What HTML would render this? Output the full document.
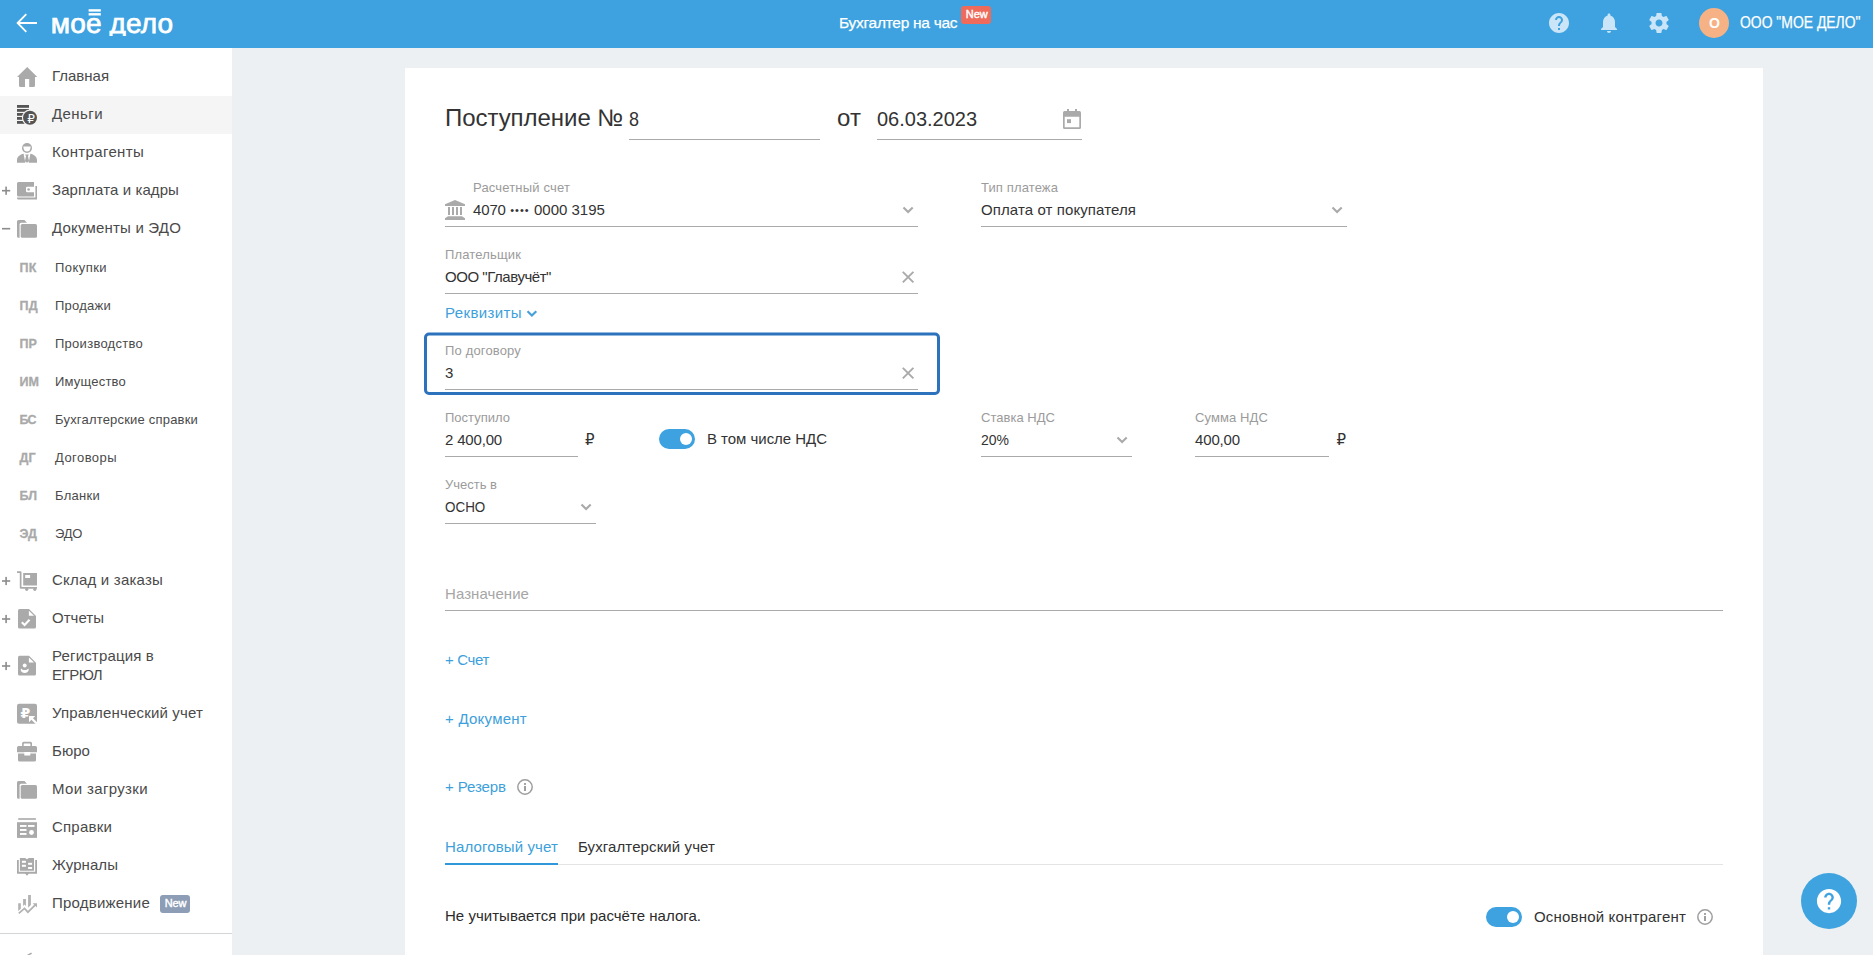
<!DOCTYPE html>
<html lang="ru"><head><meta charset="utf-8"><title>Поступление — Моё дело</title>
<style>
html,body{margin:0;padding:0;}
body{width:1873px;height:955px;overflow:hidden;position:relative;background:#ecf0f3;font-family:"Liberation Sans",sans-serif;}
.t{position:absolute;white-space:nowrap;line-height:20px;height:20px;}
.dj{font-family:"DejaVu Sans","Liberation Sans",sans-serif;}
.abs{position:absolute;}
#hdr{position:absolute;left:0;top:0;width:1873px;height:48px;background:#3da2df;}
#side{position:absolute;left:0;top:48px;width:232px;height:907px;background:#fff;}
#card{position:absolute;left:405px;top:68px;width:1358px;height:887px;background:#fff;}
.ul{position:absolute;height:1px;background:#aaa;}
.act{position:absolute;left:0;top:96px;width:232px;height:38px;background:#f5f5f5;}
.badge{position:absolute;border-radius:3px;}
.tog{position:absolute;width:36px;height:20px;border-radius:10px;background:#3da2df;}
.tog i{position:absolute;right:3px;top:4px;width:12px;height:12px;border-radius:50%;background:#fff;}
svg{position:absolute;overflow:visible;}
.logo{-webkit-text-stroke:0.75px #fff;}
.ws{-webkit-text-stroke:0.25px #fff;}
.ws2{-webkit-text-stroke:0.4px #fff;}
.ab{-webkit-text-stroke:0.3px #a9a9a9;}

</style></head><body>
<header>
<div id="hdr"></div>
<div class="badge" style="left:961px;top:6px;width:30px;height:18px;background:#ee6b5c"></div>
<div class="abs" style="left:1699px;top:8px;width:30px;height:30px;border-radius:50%;background:#f6b284"></div>
</header>
<nav>
<div id="side"></div>
<div class="act"></div>
<div class="abs" style="left:0;top:933px;width:232px;height:1px;background:#d3d6d9"></div>
<div class="badge" style="left:160px;top:895px;width:30px;height:18px;background:#8c9db5"></div>
</nav>
<main>
<div id="card"></div>
<div class="ul" style="left:629px;top:139px;width:191px"></div>
<div class="ul" style="left:877px;top:139px;width:205px"></div>
<div class="ul" style="left:445px;top:226px;width:473px"></div>
<div class="ul" style="left:981px;top:226px;width:366px"></div>
<div class="ul" style="left:445px;top:293px;width:473px"></div>
<div class="ul" style="left:445px;top:389px;width:473px"></div>
<div class="ul" style="left:445px;top:456px;width:133px"></div>
<div class="ul" style="left:981px;top:456px;width:151px"></div>
<div class="ul" style="left:1195px;top:456px;width:134px"></div>
<div class="ul" style="left:445px;top:523px;width:151px"></div>
<div class="ul" style="left:445px;top:610px;width:1278px"></div>
<div class="abs" style="left:445px;top:864px;width:1278px;height:1px;background:#e4e4e4"></div>
<div class="abs" style="left:445px;top:863px;width:113px;height:2px;background:#2f98db"></div>
<div class="tog" style="left:659px;top:429px"><i></i></div>
<div class="tog" style="left:1486px;top:907px"><i></i></div>
<div class="abs" style="left:1801px;top:873px;width:56px;height:56px;border-radius:50%;background:#3ea3df"></div>
</main>
<svg width="1873" height="955" viewBox="0 0 1873 955" style="left:0;top:0">
<!-- header: back arrow -->
<g fill="none" stroke="#fff" stroke-width="1.8" stroke-linecap="butt" stroke-linejoin="miter">
<path d="M37 23H18.5M26.3 14.2L17.6 23l8.7 8.8"/>
</g>
<!-- logo bars -->
<rect x="88.6" y="9.2" width="12.2" height="2.4" fill="#fff"/><rect x="88.6" y="13.1" width="12.2" height="2.4" fill="#fff"/>
<!-- header right icons (material) -->
<g fill="#c9e5f7">
<path transform="translate(1547,11)" d="M12 2C6.48 2 2 6.48 2 12s4.48 10 10 10 10-4.48 10-10S17.52 2 12 2zm1 17h-2v-2h2v2zm2.07-7.75l-.9.92C13.45 12.9 13 13.5 13 15h-2v-.5c0-1.1.45-2.1 1.17-2.83l1.24-1.26c.37-.36.59-.86.59-1.41 0-1.1-.9-2-2-2s-2 .9-2 2H8c0-2.210 1.790-4 4-4s4 1.790 4 4c0 .88-.36 1.680-.93 2.250z"/>
<path transform="translate(1597,11)" d="M12 22c1.100 0 2-.9 2-2h-4c0 1.100.89 2 2 2zm6-6v-5c0-3.070-1.640-5.640-4.500-6.320V4c0-.83-.67-1.500-1.500-1.500s-1.500.67-1.500 1.500v.68C7.630 5.360 6 7.920 6 11v5l-2 2v1h16v-1l-2-2z"/>
<path transform="translate(1647,11)" d="M19.43 12.98c.04-.32.07-.64.07-.98s-.03-.66-.07-.98l2.11-1.65c.19-.15.24-.42.12-.64l-2-3.46c-.12-.22-.39-.3-.61-.22l-2.49 1c-.52-.4-1.08-.73-1.69-.98l-.38-2.65C14.46 2.18 14.25 2 14 2h-4c-.25 0-.46.18-.49.42l-.38 2.65c-.61.25-1.17.59-1.69.98l-2.49-1c-.23-.09-.49 0-.61.22l-2 3.46c-.13.22-.07.49.12.64l2.11 1.65c-.04.32-.07.65-.07.98s.03.66.07.98l-2.11 1.65c-.19.15-.24.42-.12.64l2 3.46c.12.22.39.3.61.22l2.49-1c.52.4 1.08.73 1.69.98l.38 2.65c.03.24.24.42.49.42h4c.25 0 .46-.18.49-.42l.38-2.65c.61-.25 1.17-.59 1.69-.98l2.49 1c.23.09.49 0 .61-.22l2-3.46c.12-.22.07-.49-.12-.64l-2.11-1.65zM12 15.5c-1.93 0-3.5-1.57-3.5-3.500s1.570-3.500 3.500-3.500 3.500 1.570 3.500 3.500-1.570 3.500-3.500 3.500z"/>
</g>
<!-- SIDEBAR ICONS -->
<g fill="#aaa">
<!-- home -->
<path d="M27.200 67L17 77h2v8.500a1.500 1.500 0 0 0 1.500 1.500H25v-8h4.200v8h4.300a1.500 1.500 0 0 0 1.500-1.500V77h2.300z"/>
<!-- person -->
<circle cx="27" cy="148" r="5"/>
<path d="M23.300 146.600h7.400a3.700 5 0 0 1-7.400 0z" fill="#fff"/>
<path d="M17 162.700v-2.700c0-3.200 3-5.400 6.600-6.200l1.700 8.900zM37 162.700v-2.700c0-3.200-3-5.400-6.600-6.200l-1.700 8.900z"/>
<path d="M25.200 154.400h3.600l-.8 1.900 1.100 4.900-2.100 1.500-2.100-1.500 1.100-4.900z"/>
<!-- wallet -->
<path d="M18.500 182H34v4.800h-6.700a1.300 1.300 0 0 0-1.300 1.300v2.900a1.300 1.300 0 0 0 1.300 1.300H34v4.200H18.500a1.500 1.500 0 0 1-1.500-1.500v-11.500a1.500 1.500 0 0 1 1.500-1.500z"/>
<circle cx="28.600" cy="189.500" r="1.300"/>
<path d="M35.400 186H37v13.600H18.500a1.500 1.500 0 0 1-1.500-1.500v-.6h18.400z"/>
<!-- folder docs -->
<path d="M17 221.5a1.5 1.5 0 0 1 1.5-1.5h6l2.4 2.8h-5.800a1.500 1.500 0 0 0-1.500 1.500v13.500h-1.100a1.500 1.500 0 0 1-1.500-1.500z"/>
<rect x="20.7" y="224" width="16.3" height="13.8" rx="1.6"/>
<!-- cart -->
<path d="M17 571.300h3.600a.9.900 0 0 1 .9.900v14.900H37v1.700H20.800a1 1 0 0 1-1-1V573H17z"/>
<path d="M23.200 573H37v12.600H23.200zM25.200 575v2.900h4.900V575z" fill-rule="evenodd"/>
<circle cx="26.700" cy="589.300" r="1.600"/><circle cx="34.800" cy="589.300" r="1.600"/>
<!-- report doc -->
<path d="M19.500 609H29l7 7v11.100a1.500 1.500 0 0 1-1.500 1.500h-15a1.500 1.500 0 0 1-1.500-1.500v-16.600a1.500 1.500 0 0 1 1.500-1.500z"/>
<!-- reg doc -->
<path d="M19.500 655.800H29l7 7v11.200a1.500 1.500 0 0 1-1.500 1.500h-15a1.500 1.500 0 0 1-1.500-1.500v-16.700a1.500 1.500 0 0 1 1.500-1.500z"/>
<!-- mgmt -->
<rect x="17" y="703.800" width="20" height="20" rx="2"/>
<!-- briefcase -->
<path d="M23.600 741.800h6.900a1.500 1.500 0 0 1 1.500 1.500v2.700h-1.600v-2.100a.5.500 0 0 0-.5-.5h-5.700a.5.500 0 0 0-.5.500v2.100h-1.600v-2.700a1.500 1.500 0 0 1 1.500-1.500z"/>
<path d="M18.500 746h17a1.500 1.500 0 0 1 1.500 1.500v4.800H30.300v-.4h-6v.4H17v-4.800a1.500 1.500 0 0 1 1.500-1.500z"/>
<path d="M18 753.400h6.300v2.100h6v-2.100H36v6.700a1.500 1.500 0 0 1-1.500 1.500h-15a1.500 1.500 0 0 1-1.500-1.500z"/>
<!-- folder downloads -->
<path d="M17 782.5a1.5 1.5 0 0 1 1.5-1.5h6l2.4 2.8h-5.800a1.500 1.500 0 0 0-1.500 1.500v13.500h-1.100a1.500 1.500 0 0 1-1.500-1.500z"/>
<rect x="20.7" y="785" width="16.3" height="13.8" rx="1.6"/>
<!-- spravki -->
<rect x="18.200" y="818.200" width="17.700" height="1.600"/>
<rect x="17" y="822.200" width="20" height="15.700"/>
<!-- journals -->
<path d="M17 860.100h1.800v11.700H35.200V860.100H37v13.700H28.700l-1.700 1.900-1.700-1.900H17z"/>
<path d="M19.900 857.900h5.200l1.900 1.300 1.900-1.300h5.100v12.800H19.900z"/>
</g>
<!-- whites on sidebar icons -->
<g fill="#fff">
<path d="M28.900 610.700v5.100h5.200z"/>
<path d="M28.900 657.500v5.100h5.200z"/>
<path d="M21.800 622.300l2.800 2.700 4.900-5.300" fill="none" stroke="#fff" stroke-width="2.100"/>
<circle cx="24.700" cy="665.500" r="1.950"/>
<path d="M21.100 668.400c.9 1.100 2.100 1.700 3.600 1.700s2.700-.6 3.600-1.700c.3.400.4.900.4 1.400 0 1.900-1.800 3.300-4 3.300s-4-1.400-4-3.300c0-.5.100-1 .4-1.400z"/>
<!-- spravki lines -->
<rect x="20" y="825" width="6.500" height="1.900"/><rect x="28" y="825" width="6.500" height="1.900"/>
<rect x="20" y="829" width="6.500" height="1.900"/><rect x="20" y="833" width="6.500" height="1.900"/>
<circle cx="31.500" cy="832.500" r="2.400"/>
<!-- journal lines -->
<rect x="21.900" y="860.800" width="4" height="2"/><rect x="21.900" y="864.800" width="4" height="2"/>
<rect x="28.100" y="862.800" width="4" height="2"/><rect x="28.100" y="867" width="4" height="2"/>
<!-- mgmt arrow -->
<path d="M29 716h6.200l-2.200 2.200 4 4v1.600h-1.600l-4-4L29 722.200z"/>
</g>
<!-- promotion icon -->
<g fill="#b2b2b2"><path d="M18.200 903.200h2.600v5.500l-2.600 2.300z"/><path d="M23.100 899.100h2.800v6.800l-1.400-1.300-1.400 1.300z"/><path d="M28.100 895.100h2.800v10l-2.800 2.700z"/><path d="M32.700 903.200H37v4.300z"/></g>
<path d="M18.800 913.400l5.700-5 3.400 3.700 7.700-7.400" fill="none" stroke="#b2b2b2" stroke-width="1.800"/>
<!-- money (active) -->
<g fill="#555">
<rect x="17" y="105" width="12" height="2.8"/><rect x="17" y="109" width="12" height="2.8"/><rect x="17" y="113" width="12" height="2.8"/><rect x="17" y="117" width="12" height="2.8"/><rect x="17" y="121" width="12" height="2.8"/>
</g>
<circle cx="30" cy="117.700" r="8.100" fill="#f5f5f5"/><circle cx="30" cy="117.700" r="7" fill="#555"/>
<!-- FORM ICONS -->
<g fill="#aaa">
<path d="M455 200l10 4.300V206H445v-1.700z"/>
<rect x="448" y="207" width="2" height="8"/><rect x="452" y="207" width="2" height="8"/><rect x="456" y="207" width="2" height="8"/><rect x="460" y="207" width="2" height="8"/>
<path d="M448 216.200h14l3 2.100V220H445v-1.700z"/>
<!-- calendar -->
<path d="M1067 109h2v2.100h6V109h2v2.100h2.400a1.600 1.600 0 0 1 1.600 1.600v14.700a1.600 1.600 0 0 1-1.600 1.600h-14.800a1.600 1.600 0 0 1-1.600-1.600v-14.700a1.600 1.600 0 0 1 1.600-1.600h2.400zM1064.700 116.800v10.500h14.600v-10.500z" fill-rule="evenodd"/>
<rect x="1067" y="119.200" width="4" height="3.900"/>
</g>
<!-- chevrons -->
<g fill="none" stroke="#aaa" stroke-width="2.100">
<path d="M903.500 207.500l4.600 4.600 4.600-4.600"/>
<path d="M1332.500 207.500l4.600 4.600 4.600-4.600"/>
<path d="M1117.500 437.500l4.600 4.600 4.600-4.600"/>
<path d="M581.500 504.500l4.600 4.600 4.600-4.600"/>
</g>
<!-- X -->
<g fill="none" stroke="#aaa" stroke-width="1.900">
<path d="M902.800 271.800l10.600 10.600M913.400 271.800l-10.600 10.600"/>
<path d="M902.800 367.800l10.600 10.600M913.400 367.800l-10.600 10.600"/>
</g>
<path d="M527.500 311.200l4.400 4.400 4.400-4.400" fill="none" stroke="#459fd9" stroke-width="2.100"/>
<!-- info -->
<g fill="none" stroke="#9e9e9e" stroke-width="1.500"><circle cx="525" cy="787" r="7.200"/><circle cx="1705" cy="917" r="7.200"/></g>
<g fill="#9e9e9e"><rect x="524" y="783.100" width="2" height="1.800"/><rect x="524" y="786" width="2" height="5"/><rect x="1704" y="913.100" width="2" height="1.800"/><rect x="1704" y="916" width="2" height="5"/></g>
<path transform="translate(1814.5,886.600) scale(1.21)" d="M12 2C6.48 2 2 6.48 2 12s4.48 10 10 10 10-4.48 10-10S17.52 2 12 2zm1 17h-2v-2h2v2zm2.07-7.75l-.9.92C13.45 12.9 13 13.5 13 15h-2v-.5c0-1.1.45-2.1 1.17-2.83l1.24-1.26c.37-.36.59-.86.59-1.41 0-1.1-.9-2-2-2s-2 .9-2 2H8c0-2.21 1.79-4 4-4s4 1.79 4 4c0 .88-.36 1.68-.93 2.25z" fill="#fff"/>
<path d="M31.600 953.100L27 955.800" fill="none" stroke="#aaa" stroke-width="1.600"/>
<!-- focus ring -->
<rect x="425.500" y="334" width="513" height="59.400" rx="3.500" fill="none" stroke="#2d72bd" stroke-width="3"/>
<!-- plus / minus -->
<g fill="#8c8c8c">
<rect x="2" y="189.9" width="8.200" height="1.600"/>
<rect x="5.300" y="186.6" width="1.600" height="8.200"/>
<rect x="2" y="227.9" width="8.200" height="1.600"/>
<rect x="2" y="580.2" width="8.200" height="1.600"/>
<rect x="5.300" y="576.9" width="1.600" height="8.200"/>
<rect x="2" y="618.2" width="8.200" height="1.600"/>
<rect x="5.300" y="614.9" width="1.600" height="8.200"/>
<rect x="2" y="665.2" width="8.200" height="1.600"/>
<rect x="5.300" y="661.9" width="1.600" height="8.200"/>
</g>
</svg>
<header>
<span class="t ws" style="left:839px;top:12.600000000000001px;font-size:15.5px;color:#fff;letter-spacing:-0.276px;">Бухгалтер на час</span>
<span class="t ws2" style="left:965.8px;top:4.199999999999999px;font-size:11px;color:#fff;letter-spacing:-0.005px;">New</span>
<span class="t sx" style="left:1709.3px;top:12.8px;font-size:14px;color:#fff;font-weight:700;transform:scaleX(1.0009);transform-origin:0 50%;">О</span>
<span class="t ws sx" style="left:1740px;top:12.5px;font-size:15.6px;color:#fff;transform:scaleX(0.8928);transform-origin:0 50%;">ООО "МОЕ ДЕЛО"</span>
<span class="t logo" style="left:50.8px;top:13.7px;font-size:28px;color:#fff;letter-spacing:0.139px;">мое дело</span>
<div class="abs" style="left:106px;top:35.600px;width:28px;height:5px;background:#3da2df"></div>
</header>
<nav>
<span class="t" style="left:52px;top:66px;font-size:15px;color:#4a4a4a;letter-spacing:-0.013px;">Главная</span>
<span class="t" style="left:52px;top:104px;font-size:15px;color:#4a4a4a;letter-spacing:0.424px;">Деньги</span>
<span class="t" style="left:52px;top:142px;font-size:15px;color:#4a4a4a;letter-spacing:0.332px;">Контрагенты</span>
<span class="t" style="left:52px;top:180px;font-size:15px;color:#4a4a4a;letter-spacing:0.093px;">Зарплата и кадры</span>
<span class="t" style="left:52px;top:218px;font-size:15px;color:#4a4a4a;letter-spacing:0.190px;">Документы и ЭДО</span>
<span class="t" style="left:52px;top:570px;font-size:15px;color:#4a4a4a;letter-spacing:0.209px;">Склад и заказы</span>
<span class="t" style="left:52px;top:608px;font-size:15px;color:#4a4a4a;letter-spacing:0.023px;">Отчеты</span>
<span class="t" style="left:52px;top:646px;font-size:15px;color:#4a4a4a;letter-spacing:0.167px;">Регистрация в</span>
<span class="t" style="left:52px;top:665px;font-size:15px;color:#4a4a4a;letter-spacing:-0.494px;">ЕГРЮЛ</span>
<span class="t" style="left:52px;top:703px;font-size:15px;color:#4a4a4a;letter-spacing:0.166px;">Управленческий учет</span>
<span class="t" style="left:52px;top:741px;font-size:15px;color:#4a4a4a;letter-spacing:0.055px;">Бюро</span>
<span class="t" style="left:52px;top:779px;font-size:15px;color:#4a4a4a;letter-spacing:0.354px;">Мои загрузки</span>
<span class="t" style="left:52px;top:817px;font-size:15px;color:#4a4a4a;letter-spacing:0.205px;">Справки</span>
<span class="t" style="left:52px;top:855px;font-size:15px;color:#4a4a4a;letter-spacing:0.069px;">Журналы</span>
<span class="t" style="left:52px;top:893px;font-size:15px;color:#4a4a4a;letter-spacing:0.216px;">Продвижение</span>
<span class="t ab" style="left:19.4px;top:258px;font-size:12.5px;color:#a9a9a9;font-weight:700;letter-spacing:0.488px;">ПК</span>
<span class="t" style="left:55px;top:258px;font-size:13px;color:#4a4a4a;letter-spacing:0.442px;">Покупки</span>
<span class="t ab" style="left:19.4px;top:296px;font-size:12.5px;color:#a9a9a9;font-weight:700;letter-spacing:0.355px;">ПД</span>
<span class="t" style="left:55px;top:296px;font-size:13px;color:#4a4a4a;letter-spacing:0.243px;">Продажи</span>
<span class="t ab" style="left:19.4px;top:334px;font-size:12.5px;color:#a9a9a9;font-weight:700;letter-spacing:0.136px;">ПР</span>
<span class="t" style="left:55px;top:334px;font-size:13px;color:#4a4a4a;letter-spacing:0.270px;">Производство</span>
<span class="t ab" style="left:19.4px;top:372px;font-size:12.5px;color:#a9a9a9;font-weight:700;letter-spacing:0.097px;">ИМ</span>
<span class="t" style="left:55px;top:372px;font-size:13px;color:#4a4a4a;letter-spacing:0.205px;">Имущество</span>
<span class="t ab" style="left:19.4px;top:410px;font-size:12.5px;color:#a9a9a9;font-weight:700;letter-spacing:-0.630px;">БС</span>
<span class="t" style="left:55px;top:410px;font-size:13px;color:#4a4a4a;letter-spacing:0.193px;">Бухгалтерские справки</span>
<span class="t ab" style="left:19.4px;top:448px;font-size:12.5px;color:#a9a9a9;font-weight:700;letter-spacing:0.300px;">ДГ</span>
<span class="t" style="left:55px;top:448px;font-size:13px;color:#4a4a4a;letter-spacing:0.445px;">Договоры</span>
<span class="t ab" style="left:19.4px;top:486px;font-size:12.5px;color:#a9a9a9;font-weight:700;letter-spacing:0.073px;">БЛ</span>
<span class="t" style="left:55px;top:486px;font-size:13px;color:#4a4a4a;letter-spacing:0.276px;">Бланки</span>
<span class="t ab" style="left:19.4px;top:524px;font-size:12.5px;color:#a9a9a9;font-weight:700;letter-spacing:0.050px;">ЭД</span>
<span class="t" style="left:55px;top:524px;font-size:13px;color:#4a4a4a;letter-spacing:-0.276px;">ЭДО</span>
<span class="t ws2" style="left:164.7px;top:893.2px;font-size:11px;color:#fff;letter-spacing:-0.172px;">New</span>
<span class="t dj" style="left:27.2px;top:108.8px;font-size:12px;color:#fff;letter-spacing:-0.141px;">₽</span>
<span class="t dj" style="left:20.5px;top:702.6px;font-size:14px;color:#fff;font-weight:700;letter-spacing:-0.750px;">₽</span>
</nav>
<main>
<span class="t" style="left:445px;top:108px;font-size:24px;color:#333;letter-spacing:-0.049px;">Поступление №</span>
<span class="t sx" style="left:629px;top:109px;font-size:20px;color:#333;transform:scaleX(0.8989);transform-origin:0 50%;">8</span>
<span class="t" style="left:837px;top:108px;font-size:24px;color:#333;letter-spacing:0.094px;">от</span>
<span class="t" style="left:877px;top:109px;font-size:20px;color:#333;letter-spacing:-0.011px;">06.03.2023</span>
<span class="t" style="left:473px;top:178px;font-size:13px;color:#9b9b9b;letter-spacing:0.170px;">Расчетный счет</span>
<span class="t" style="left:473px;top:200px;font-size:15px;color:#333;letter-spacing:-0.144px;">4070</span>
<span class="t" style="left:510.2px;top:199.6px;font-size:11px;color:#333;letter-spacing:1.023px;">••••</span>
<span class="t" style="left:534px;top:200px;font-size:15px;color:#333;letter-spacing:-0.012px;">0000 3195</span>
<span class="t" style="left:981px;top:178px;font-size:13px;color:#9b9b9b;letter-spacing:0.121px;">Тип платежа</span>
<span class="t" style="left:981px;top:200px;font-size:15px;color:#333;letter-spacing:0.096px;">Оплата от покупателя</span>
<span class="t" style="left:445px;top:245px;font-size:13px;color:#9b9b9b;letter-spacing:0.152px;">Плательщик</span>
<span class="t" style="left:445px;top:267px;font-size:15px;color:#333;letter-spacing:-0.455px;">ООО "Главучёт"</span>
<span class="t" style="left:445px;top:303px;font-size:15px;color:#3d9fdb;letter-spacing:0.387px;">Реквизиты</span>
<span class="t" style="left:445px;top:341px;font-size:13px;color:#9b9b9b;letter-spacing:0.158px;">По договору</span>
<span class="t" style="left:445px;top:363px;font-size:15px;color:#333;letter-spacing:-0.344px;">3</span>
<span class="t" style="left:445px;top:408px;font-size:13px;color:#9b9b9b;letter-spacing:0.007px;">Поступило</span>
<span class="t" style="left:445px;top:430px;font-size:15px;color:#333;letter-spacing:-0.174px;">2 400,00</span>
<span class="t dj" style="left:585px;top:430px;font-size:15px;color:#333;">₽</span>
<span class="t" style="left:707px;top:429px;font-size:15px;color:#333;letter-spacing:-0.032px;">В том числе НДС</span>
<span class="t" style="left:981px;top:408px;font-size:13px;color:#9b9b9b;letter-spacing:0.027px;">Ставка НДС</span>
<span class="t sx" style="left:981px;top:430px;font-size:15px;color:#333;transform:scaleX(0.9324);transform-origin:0 50%;">20%</span>
<span class="t" style="left:1195px;top:408px;font-size:13px;color:#9b9b9b;letter-spacing:0.106px;">Сумма НДС</span>
<span class="t" style="left:1195px;top:430px;font-size:15px;color:#333;letter-spacing:-0.148px;">400,00</span>
<span class="t dj" style="left:1336.5px;top:430px;font-size:15px;color:#333;">₽</span>
<span class="t" style="left:445px;top:475px;font-size:13px;color:#9b9b9b;letter-spacing:-0.002px;">Учесть в</span>
<span class="t sx" style="left:445px;top:497px;font-size:15px;color:#333;transform:scaleX(0.8956);transform-origin:0 50%;">ОСНО</span>
<span class="t" style="left:445px;top:583.6px;font-size:15px;color:#a6a6a6;letter-spacing:0.066px;">Назначение</span>
<span class="t" style="left:445px;top:650px;font-size:15px;color:#3d9fdb;letter-spacing:-0.354px;">+ Счет</span>
<span class="t" style="left:445px;top:709px;font-size:15px;color:#3d9fdb;letter-spacing:0.253px;">+ Документ</span>
<span class="t" style="left:445px;top:777px;font-size:15px;color:#3d9fdb;letter-spacing:-0.082px;">+ Резерв</span>
<span class="t" style="left:445px;top:837.2px;font-size:15px;color:#3d9fdb;letter-spacing:0.125px;">Налоговый учет</span>
<span class="t" style="left:578px;top:837.2px;font-size:15px;color:#333;letter-spacing:0.102px;">Бухгалтерский учет</span>
<span class="t" style="left:445px;top:906px;font-size:15px;color:#2b2b2b;letter-spacing:0.026px;">Не учитывается при расчёте налога.</span>
<span class="t" style="left:1534px;top:907px;font-size:15px;color:#333;letter-spacing:0.185px;">Основной контрагент</span>
</main>

</body></html>
